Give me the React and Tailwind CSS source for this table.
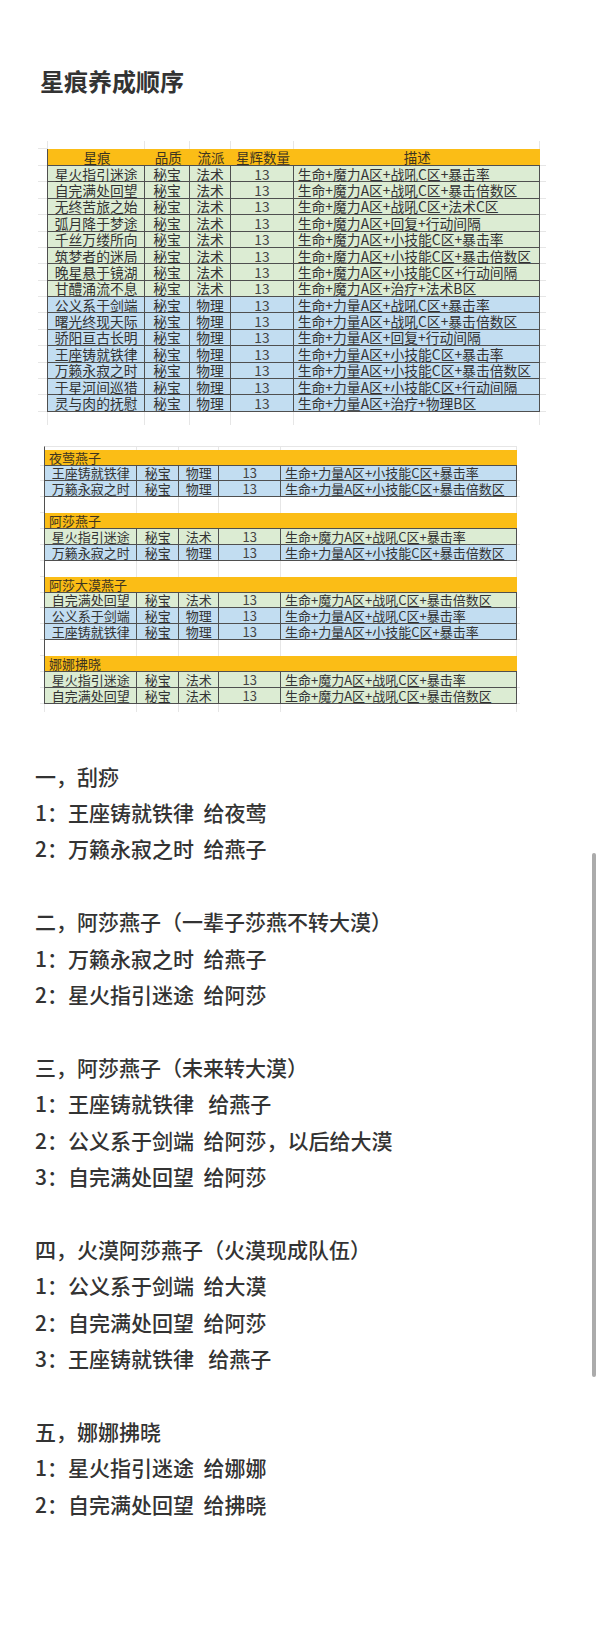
const rows1 = [
  ["星火指引迷途", "法术", "生命+魔力A区+战吼C区+暴击率"],
  ["自完满处回望", "法术", "生命+魔力A区+战吼C区+暴击倍数区"],
  ["无终苦旅之始", "法术", "生命+魔力A区+战吼C区+法术C区"],
  ["弧月降于梦途", "法术", "生命+魔力A区+回复+行动间隔"],
  ["千丝万缕所向", "法术", "生命+魔力A区+小技能C区+暴击率"],
  ["筑梦者的迷局", "法术", "生命+魔力A区+小技能C区+暴击倍数区"],
  ["晚星悬于镜湖", "法术", "生命+魔力A区+小技能C区+行动间隔"],
  ["甘醴涌流不息", "法术", "生命+魔力A区+治疗+法术B区"],
  ["公义系于剑端", "物理", "生命+力量A区+战吼C区+暴击率"],
  ["曙光终现天际", "物理", "生命+力量A区+战吼C区+暴击倍数区"],
  ["骄阳亘古长明", "物理", "生命+力量A区+回复+行动间隔"],
  ["王座铸就铁律", "物理", "生命+力量A区+小技能C区+暴击率"],
  ["万籁永寂之时", "物理", "生命+力量A区+小技能C区+暴击倍数区"],
  ["于星河间巡猎", "物理", "生命+力量A区+小技能C区+行动间隔"],
  ["灵与肉的抚慰", "物理", "生命+力量A区+治疗+物理B区"],
];

const groups = [
  {
    name: "夜莺燕子",
    items: [
      ["王座铸就铁律", "物理", "生命+力量A区+小技能C区+暴击率"],
      ["万籁永寂之时", "物理", "生命+力量A区+小技能C区+暴击倍数区"],
    ],
  },
  {
    name: "阿莎燕子",
    items: [
      ["星火指引迷途", "法术", "生命+魔力A区+战吼C区+暴击率"],
      ["万籁永寂之时", "物理", "生命+力量A区+小技能C区+暴击倍数区"],
    ],
  },
  {
    name: "阿莎大漠燕子",
    items: [
      ["自完满处回望", "法术", "生命+魔力A区+战吼C区+暴击倍数区"],
      ["公义系于剑端", "物理", "生命+力量A区+战吼C区+暴击率"],
      ["王座铸就铁律", "物理", "生命+力量A区+小技能C区+暴击率"],
    ],
  },
  {
    name: "娜娜拂晓",
    items: [
      ["星火指引迷途", "法术", "生命+魔力A区+战吼C区+暴击率"],
      ["自完满处回望", "法术", "生命+魔力A区+战吼C区+暴击倍数区"],
    ],
  },
];

const sections = [
  ["一，刮痧", "1：王座铸就铁律  给夜莺", "2：万籁永寂之时  给燕子"],
  ["二，阿莎燕子（一辈子莎燕不转大漠）", "1：万籁永寂之时  给燕子", "2：星火指引迷途  给阿莎"],
  [
    "三，阿莎燕子（未来转大漠）",
    "1：王座铸就铁律   给燕子",
    "2：公义系于剑端  给阿莎，以后给大漠",
    "3：自完满处回望  给阿莎",
  ],
  [
    "四，火漠阿莎燕子（火漠现成队伍）",
    "1：公义系于剑端  给大漠",
    "2：自完满处回望  给阿莎",
    "3：王座铸就铁律   给燕子",
  ],
  ["五，娜娜拂晓", "1：星火指引迷途  给娜娜", "2：自完满处回望  给拂晓"],
];

const dark = "border-[#4f4f4f]";
const faint = "border-[#e6e6e6]";

// big table: column widths
function BigTable() {
  return (
    <div className="ml-[38px] mt-[44px] w-[508px] text-[#333]">
      {/* faint spreadsheet row above */}
      <div className="flex h-[8px]">
        <div className={`w-[9px] border-b ${faint}`} />
        <div className={`w-[98.3px] border-l border-r ${faint}`} />
        <div className={`w-[44.3px] border-r ${faint}`} />
        <div className={`w-[41.7px] border-r ${faint}`} />
        <div className={`w-[62.5px] border-r ${faint}`} />
        <div className={`w-[246.2px] border-r ${faint}`} />
      </div>
      <div className="flex h-[17px]">
        <div className={`w-[9px] border-b ${faint}`} />
        <div className={`flex w-[493px] bg-[#fbbd16] border-l border-b ${dark} text-[13.5px] leading-[14px] text-[#3d3420]`}>
          <div className="w-[98.3px] flex items-center justify-center">星痕</div>
          <div className="w-[44.3px] flex items-center justify-center">品质</div>
          <div className="w-[41.7px] flex items-center justify-center">流派</div>
          <div className="w-[62.5px] flex items-center justify-center">星辉数量</div>
          <div className="w-[246.2px] flex items-center justify-center">描述</div>
        </div>
        <div className={`w-[6px] border-b ${faint}`} />
      </div>
      {rows1.map(([name, school, desc], i) => {
        const bg = school === "法术" ? "bg-[#dcecd3]" : "bg-[#c2ddf1]";
        return (
          <div key={i} className="flex h-[16.38px] text-[13.8px] leading-[14px] whitespace-nowrap">
            <div className={`w-[9px] border-b ${faint}`} />
            <div className={`w-[98.3px] ${bg} border-l border-r border-b ${dark} flex items-center justify-center`}>{name}</div>
            <div className={`w-[44.3px] ${bg} border-r border-b ${dark} flex items-center justify-center`}>秘宝</div>
            <div className={`w-[41.7px] ${bg} border-r border-b ${dark} flex items-center justify-center`}>{school}</div>
            <div className={`w-[62.5px] ${bg} border-r border-b ${dark} flex items-center justify-center text-[#444]`}>13</div>
            <div className={`w-[246.2px] ${bg} border-r border-b ${dark} flex items-center pl-[4px]`}>{desc}</div>
            <div className={`w-[6px] border-b ${faint}`} />
          </div>
        );
      })}
      <div className="flex h-[13px]">
        <div className="w-[9px]" />
        <div className={`w-[98.3px] border-l border-r ${faint}`} />
        <div className={`w-[44.3px] border-r ${faint}`} />
        <div className={`w-[41.7px] border-r ${faint}`} />
        <div className={`w-[62.5px] border-r ${faint}`} />
        <div className={`w-[246.2px] border-r ${faint}`} />
      </div>
    </div>
  );
}

function DataRow({ row }) {
  const [name, school, desc] = row;
  const bg = school === "法术" ? "bg-[#dcecd3]" : "bg-[#c2ddf1]";
  return (
    <div className="flex h-[15.875px] text-[13px] leading-[13px] whitespace-nowrap">
      <div className={`w-[4px] border-b ${faint}`} />
      <div className={`w-[93.3px] ${bg} border-l border-r border-b ${dark} flex items-center justify-center`}>{name}</div>
      <div className={`w-[42px] ${bg} border-r border-b ${dark} flex items-center justify-center`}>秘宝</div>
      <div className={`w-[40px] ${bg} border-r border-b ${dark} flex items-center justify-center`}>{school}</div>
      <div className={`w-[61.7px] ${bg} border-r border-b ${dark} flex items-center justify-center text-[#444]`}>13</div>
      <div className={`w-[236.3px] ${bg} border-r border-b ${dark} flex items-center pl-[4px]`}>{desc}</div>
      <div className={`w-[3px] border-b ${faint}`} />
    </div>
  );
}

function TeamTable() {
  return (
    <div className="ml-[40px] mt-[21px] w-[481px] text-[#333]">
      <div className="flex h-[4px]">
        <div className="w-[4px]" />
        <div className={`w-[93.3px] border-l border-r border-t ${dark} border-r-[#e6e6e6] border-t-[#e6e6e6]`} />
        <div className={`w-[42px] border-r border-t ${faint}`} />
        <div className={`w-[40px] border-r border-t ${faint}`} />
        <div className={`w-[61.7px] border-r border-t ${faint}`} />
        <div className={`w-[236.3px] border-r border-t ${faint}`} />
      </div>
      {groups.map((g, gi) => (
        <div key={gi}>
          <div className="flex h-[15.875px]">
            <div className={`w-[4px] border-b ${faint}`} />
            <div className={`w-[473.3px] bg-[#fbbd16] border-l border-b ${dark} pl-[4px] text-[13px] leading-[13px] text-[#3d3420] flex items-center`}>
              {g.name}
            </div>
          </div>
          {g.items.map((r, i) => (
            <DataRow key={i} row={r} />
          ))}
          {gi < groups.length - 1 && (
            <div className="flex h-[15.875px]">
              <div className={`w-[4px] border-b ${faint}`} />
              <div className={`w-[93.3px] border-l border-r ${dark} border-r-[#e6e6e6]`} />
              <div className={`w-[42px] border-r ${faint}`} />
              <div className={`w-[40px] border-r ${faint}`} />
              <div className={`w-[61.7px] border-r ${faint}`} />
              <div className={`w-[236.3px] border-r ${faint}`} />
            </div>
          )}
        </div>
      ))}
      <div className="flex h-[8px]">
        <div className="w-[4px]" />
        <div className={`w-[93.3px] border-l border-r ${faint}`} />
        <div className={`w-[42px] border-r ${faint}`} />
        <div className={`w-[40px] border-r ${faint}`} />
        <div className={`w-[61.7px] border-r ${faint}`} />
        <div className={`w-[236.3px] border-r ${faint}`} />
      </div>
    </div>
  );
}

export default function App() {
  return (
    <div className="relative w-[600px] min-h-[1649px] bg-white font-['Noto_Sans_CJK_SC','Noto_Sans',sans-serif] overflow-hidden">
      <h1 className="pt-[65px] pl-[40px] text-[24px] leading-[32px] font-bold text-[#333]">星痕养成顺序</h1>

      <BigTable />
      <TeamTable />

      <div className="mt-[46px] pl-[35px] text-[21px] leading-[36.4px] font-medium text-[#333] whitespace-pre">
        {sections.map((sec, si) => (
          <div key={si} className={si > 0 ? "mt-[36.4px]" : ""}>
            {sec.map((line, li) => (
              <div key={li}>{line}</div>
            ))}
          </div>
        ))}
      </div>

      {/* scrollbar overlay */}
      <div className="absolute left-[592px] top-[853px] w-[4px] h-[524px] rounded-full bg-[#ababab]" />
    </div>
  );
}
